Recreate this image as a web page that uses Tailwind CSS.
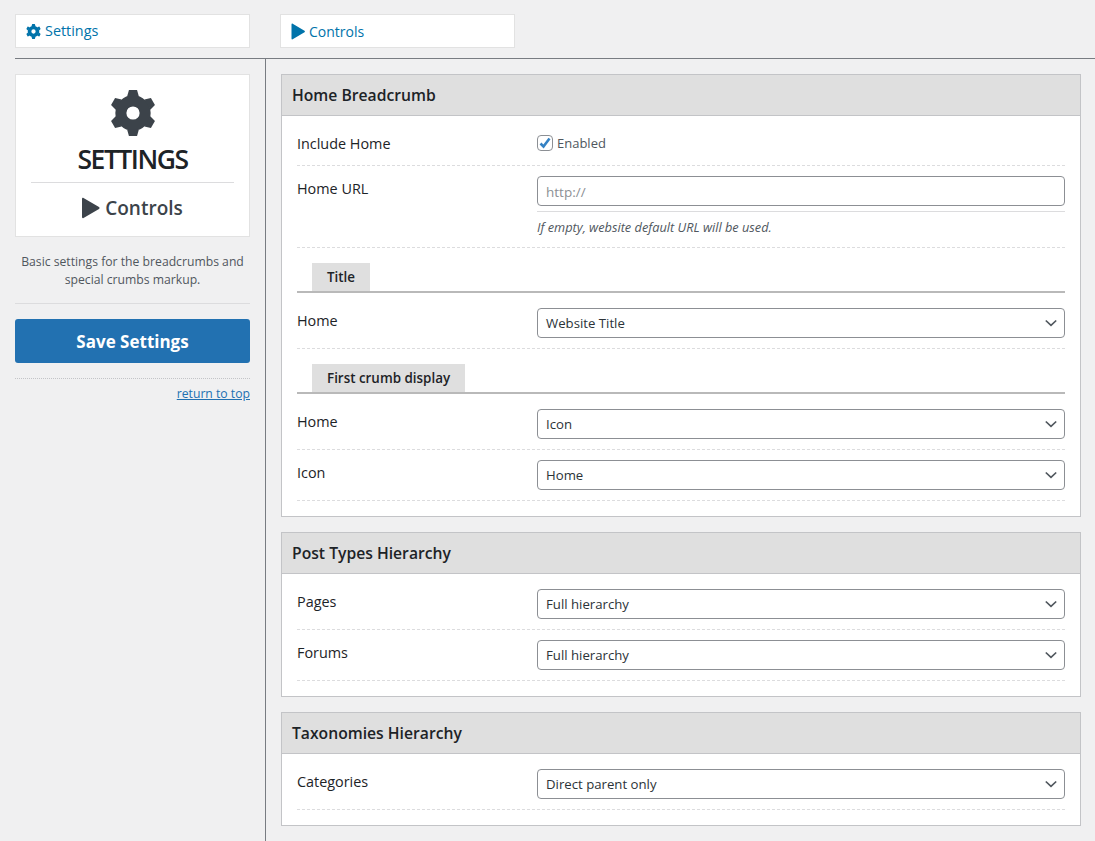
<!DOCTYPE html>
<html lang="en">
<head>
    <meta charset="UTF-8">
    <title>Breadcrumb Settings</title>
    <script src="https://cdn.jsdelivr.net/npm/@tailwindcss/browser@4"></script>
</head>
<body class="bg-[#f0f0f1] font-['Open_Sans',sans-serif] text-[14.4px] text-[#1d2327]">
<div class="h-[841px] overflow-hidden">
    <!-- top tabs -->
    <div class="flex gap-[30px] pl-[15px] pt-[14px]">
        <div class="w-[235px] h-[34px] bg-white border border-[#e2e2e2] flex items-center pl-[10px] gap-[4px] text-[#0073aa]">
            <svg class="w-[15px] h-[15px]" viewBox="-12.500 -12.500 25 25" fill="#0073aa">
                <circle r="6.600" fill="none" stroke="#0073aa" stroke-width="6"/>
                <path d="M-3.200-9-2.200-12.500H2.200L3.200-9z"/>
                <path d="M-3.200-9-2.200-12.500H2.200L3.200-9z" transform="rotate(60)"/>
                <path d="M-3.200-9-2.200-12.500H2.200L3.200-9z" transform="rotate(120)"/>
                <path d="M-3.200-9-2.200-12.500H2.200L3.200-9z" transform="rotate(180)"/>
                <path d="M-3.200-9-2.200-12.500H2.200L3.200-9z" transform="rotate(240)"/>
                <path d="M-3.200-9-2.200-12.500H2.200L3.200-9z" transform="rotate(300)"/>
            </svg>
            <span>Settings</span>
        </div>
        <div class="w-[235px] h-[34px] bg-white border border-[#e2e2e2] flex items-center pl-[10px] gap-[4px] text-[#0073aa]">
            <svg class="w-[14px] h-[17px]" viewBox="0 0 14 17" fill="#0073aa"><path d="M.5 1.500C.5.700 1 .3 1.700.7l11.800 7c.5.300.5 1.200 0 1.500L1.700 16.300C1 16.700.5 16.300.5 15.500z"/></svg>
            <span class="text-[14px]">Controls</span>
        </div>
    </div>

    <div class="flex ml-[15px] mt-[10px] border-t border-[#787c82] h-[800px]">
        <!-- left column -->
        <div class="w-[251px] shrink-0 border-r border-[#787c82] pr-[15px] pt-[15px]">
            <div class="w-[235px] h-[163px] bg-white border border-[#e2e2e2] flex flex-col items-center pt-[15px]">
                <svg class="w-[46px] h-[46px]" viewBox="-12.500 -12.500 25 25" fill="#3c434a">
                    <circle r="6.600" fill="none" stroke="#3c434a" stroke-width="6"/>
                    <path d="M-3.200-9-2.200-12.500H2.200L3.200-9z"/>
                    <path d="M-3.200-9-2.200-12.500H2.200L3.200-9z" transform="rotate(60)"/>
                    <path d="M-3.200-9-2.200-12.500H2.200L3.200-9z" transform="rotate(120)"/>
                    <path d="M-3.200-9-2.200-12.500H2.200L3.200-9z" transform="rotate(180)"/>
                    <path d="M-3.200-9-2.200-12.500H2.200L3.200-9z" transform="rotate(240)"/>
                    <path d="M-3.200-9-2.200-12.500H2.200L3.200-9z" transform="rotate(300)"/>
                </svg>
                <div class="mt-[6px] text-[26.500px] leading-[34px] font-semibold tracking-[-1.500px] text-[#1d2327]">SETTINGS</div>
                <div class="w-[203px] border-t border-[#dcdcde] mt-[6px]"></div>
                <div class="flex items-center gap-[5px] mt-[12px] text-[#3c434a]">
                    <svg class="w-[18px] h-[22px]" viewBox="0 0 18 22" fill="#3c434a"><path d="M0 2c0-1 .7-1.500 1.500-1l15.500 9c.7.400.7 1.500 0 2L1.500 21c-.8.500-1.500 0-1.500-1z"/></svg>
                    <span class="text-[19px] leading-[26px] font-semibold">Controls</span>
                </div>
            </div>
            <p class="mt-[16px] w-[235px] text-center text-[12.200px] leading-[18px] text-[#50575e]">Basic settings for the breadcrumbs and special crumbs markup.</p>
            <div class="w-[235px] mt-[14px] border-t border-[#dcdcde]"></div>
            <button class="block w-[235px] h-[44px] mt-[15px] pt-[2px] bg-[#2271b1] rounded-[3px] text-white text-[17px] font-bold">Save Settings</button>
            <div class="w-[235px] mt-[15px] border-t border-dotted border-[#c3c4c7]"></div>
            <div class="w-[235px] mt-[7px] text-right text-[12.200px] leading-[16px]"><a href="#" class="text-[#2271b1] underline">return to top</a></div>
        </div>

        <!-- right column -->
        <div class="pl-[15px] pt-[15px] w-[815px] flex flex-col gap-[15px]">

            <section class="h-[443px] bg-white border border-[#c3c4c7]">
                <h2 class="h-[41px] pt-[2px] bg-[#dfdfdf] border-b border-[#c3c4c7] pl-[10px] flex items-center text-[15.700px] font-semibold">Home Breadcrumb</h2>
                <div class="px-[15px]">
                    <div class="flex h-[50px] border-b border-dashed border-[#dcdcde] pt-[17px]">
                        <div class="w-[240px] leading-[22px]">Include Home</div>
                        <label class="-mt-[1px] flex items-start gap-[4px] text-[13px] leading-[22px] text-[#50575e]">
                            <span class="mt-[3px] w-[16px] h-[16px] border border-[#8c8f94] rounded-[4px] flex items-center justify-center">
                                <svg class="w-[14px] h-[14px]" viewBox="0 0 14 14" fill="none" stroke="#3582c4" stroke-width="2.600"><path d="M2.500 7.500 5.500 10.500 11.500 2.500"/></svg>
                            </span>
                            Enabled
                        </label>
                    </div>
                    <div class="flex h-[82px] border-b border-dashed border-[#dcdcde] pt-[10px]">
                        <div class="w-[240px] leading-[24px] mt-[1px]">Home URL</div>
                        <div class="w-[528px]">
                            <div class="h-[30px] border border-[#8c8f94] rounded-[4px] pl-[8px] flex items-center text-[13.500px] text-[#8c8f94]"><span class="mt-[2px]">http://</span></div>
                            <div class="mt-[5px] border-t border-[#dcdcde]"></div>
                            <p class="mt-[7px] text-[12.750px] leading-[16px] italic text-[#50575e]">If empty, website default URL will be used.</p>
                        </div>
                    </div>
                    <div class="mt-[15px] border-b-2 border-[#b9b9b9] pl-[15px]">
                        <div class="w-fit h-[28px] pt-[1px] px-[15px] bg-[#dfdfdf] flex items-center text-[13.400px] font-semibold">Title</div>
                    </div>
                    <div class="flex h-[56px] border-b border-dashed border-[#dcdcde] pt-[15px]">
                        <div class="w-[240px] leading-[24px] mt-[1px]">Home</div>
                        <div class="w-[528px] h-[30px] border border-[#8c8f94] rounded-[4px] pl-[8px] pr-[7px] flex items-center justify-between text-[13.200px] text-[#2c3338]"><span class="mt-[2px]">Website Title</span>
                            <svg class="w-[12px] h-[8px]" viewBox="0 0 12 8" fill="none" stroke="#50575e" stroke-width="1.700"><path d="M.8 1.500 6 6.300 11.200 1.500"/></svg>
                        </div>
                    </div>
                    <div class="mt-[15px] border-b-2 border-[#b9b9b9] pl-[15px]">
                        <div class="w-fit h-[28px] pt-[1px] px-[15px] bg-[#dfdfdf] flex items-center text-[13.400px] font-semibold">First crumb display</div>
                    </div>
                    <div class="flex h-[56px] border-b border-dashed border-[#dcdcde] pt-[15px]">
                        <div class="w-[240px] leading-[24px] mt-[1px]">Home</div>
                        <div class="w-[528px] h-[30px] border border-[#8c8f94] rounded-[4px] pl-[8px] pr-[7px] flex items-center justify-between text-[13.200px] text-[#2c3338]"><span class="mt-[2px]">Icon</span>
                            <svg class="w-[12px] h-[8px]" viewBox="0 0 12 8" fill="none" stroke="#50575e" stroke-width="1.700"><path d="M.8 1.500 6 6.300 11.200 1.500"/></svg>
                        </div>
                    </div>
                    <div class="flex h-[51px] border-b border-dashed border-[#dcdcde] pt-[10px]">
                        <div class="w-[240px] leading-[24px] mt-[1px]">Icon</div>
                        <div class="w-[528px] h-[30px] border border-[#8c8f94] rounded-[4px] pl-[8px] pr-[7px] flex items-center justify-between text-[13.200px] text-[#2c3338]"><span class="mt-[2px]">Home</span>
                            <svg class="w-[12px] h-[8px]" viewBox="0 0 12 8" fill="none" stroke="#50575e" stroke-width="1.700"><path d="M.8 1.500 6 6.300 11.200 1.500"/></svg>
                        </div>
                    </div>
                </div>
            </section>

            <section class="h-[165px] bg-white border border-[#c3c4c7]">
                <h2 class="h-[41px] pt-[2px] bg-[#dfdfdf] border-b border-[#c3c4c7] pl-[10px] flex items-center text-[15.700px] font-semibold">Post Types Hierarchy</h2>
                <div class="px-[15px]">
                    <div class="flex h-[56px] border-b border-dashed border-[#dcdcde] pt-[15px]">
                        <div class="w-[240px] leading-[24px] mt-[1px]">Pages</div>
                        <div class="w-[528px] h-[30px] border border-[#8c8f94] rounded-[4px] pl-[8px] pr-[7px] flex items-center justify-between text-[13.200px] text-[#2c3338]"><span class="mt-[2px]">Full hierarchy</span>
                            <svg class="w-[12px] h-[8px]" viewBox="0 0 12 8" fill="none" stroke="#50575e" stroke-width="1.700"><path d="M.8 1.500 6 6.300 11.200 1.500"/></svg>
                        </div>
                    </div>
                    <div class="flex h-[51px] border-b border-dashed border-[#dcdcde] pt-[10px]">
                        <div class="w-[240px] leading-[24px] mt-[1px]">Forums</div>
                        <div class="w-[528px] h-[30px] border border-[#8c8f94] rounded-[4px] pl-[8px] pr-[7px] flex items-center justify-between text-[13.200px] text-[#2c3338]"><span class="mt-[2px]">Full hierarchy</span>
                            <svg class="w-[12px] h-[8px]" viewBox="0 0 12 8" fill="none" stroke="#50575e" stroke-width="1.700"><path d="M.8 1.500 6 6.300 11.200 1.500"/></svg>
                        </div>
                    </div>
                </div>
            </section>

            <section class="h-[114px] bg-white border border-[#c3c4c7]">
                <h2 class="h-[41px] pt-[2px] bg-[#dfdfdf] border-b border-[#c3c4c7] pl-[10px] flex items-center text-[15.700px] font-semibold">Taxonomies Hierarchy</h2>
                <div class="px-[15px]">
                    <div class="flex h-[56px] border-b border-dashed border-[#dcdcde] pt-[15px]">
                        <div class="w-[240px] leading-[24px] mt-[1px]">Categories</div>
                        <div class="w-[528px] h-[30px] border border-[#8c8f94] rounded-[4px] pl-[8px] pr-[7px] flex items-center justify-between text-[13.200px] text-[#2c3338]"><span class="mt-[2px]">Direct parent only</span>
                            <svg class="w-[12px] h-[8px]" viewBox="0 0 12 8" fill="none" stroke="#50575e" stroke-width="1.700"><path d="M.8 1.500 6 6.300 11.200 1.500"/></svg>
                        </div>
                    </div>
                </div>
            </section>
        </div>
    </div>
</div>
</body>
</html>
